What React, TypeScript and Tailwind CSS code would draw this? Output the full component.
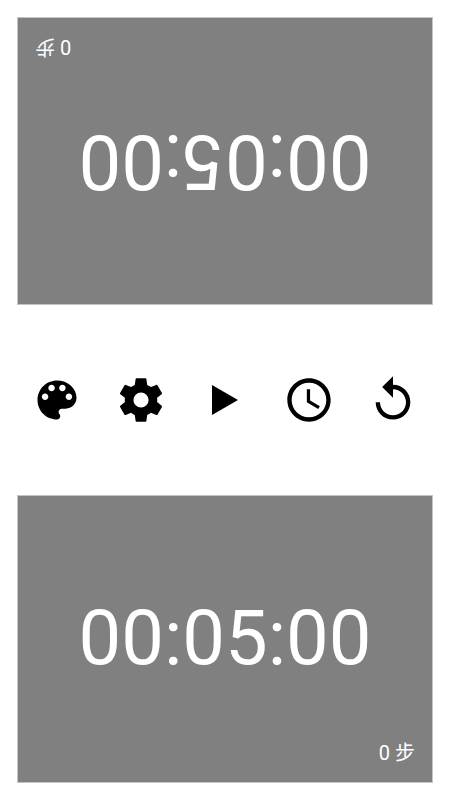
import clsx from "clsx";
import type { ReactNode } from "react";

type Player = {
  time: string;
  moves: number;
};

const players: [Player, Player] = [
  { time: "00:05:00", moves: 0 },
  { time: "00:05:00", moves: 0 },
];

export default function App() {
  return (
    <main className="flex min-h-screen flex-col bg-white p-[17px] font-['Roboto','Noto_Sans_CJK_SC',sans-serif]">
      <ClockPanel player={players[0]} flipped />
      <Toolbar />
      <ClockPanel player={players[1]} />
    </main>
  );
}

// The top panel faces the player sitting on the other side of the phone.
function ClockPanel({ player, flipped = false }: { player: Player; flipped?: boolean }) {
  return (
    <button
      type="button"
      className={clsx(
        "grid flex-1 border border-[#c4c4c4] bg-[#808080] px-[17px] pt-[13px] pb-[15px] text-white",
        flipped && "rotate-180",
      )}
    >
      <span className="col-start-1 row-start-1 self-center justify-self-center text-[76px] leading-[90px]">
        {player.time}
      </span>
      <span className="col-start-1 row-start-1 self-end justify-self-end text-[20px] leading-7">
        {player.moves} 步
      </span>
    </button>
  );
}

function Toolbar() {
  return (
    <nav className="-mx-0.5 grid grid-cols-5 py-[69px] text-black">
      <IconButton label="Theme">
        <path d="M12 3c-4.97 0-9 4.03-9 9s4.03 9 9 9c.83 0 1.5-.67 1.5-1.5 0-.39-.15-.74-.39-1.01-.23-.26-.38-.61-.38-.99 0-.83.67-1.5 1.5-1.5H16c2.76 0 5-2.24 5-5 0-4.42-4.03-8-9-8zm-5.5 9c-.83 0-1.5-.67-1.5-1.5S5.67 9 6.5 9 8 9.67 8 10.5 7.33 12 6.5 12zm3-4C8.67 8 8 7.33 8 6.5S8.67 5 9.5 5s1.5.67 1.5 1.5S10.33 8 9.5 8zm5 0c-.83 0-1.5-.67-1.5-1.5S13.67 5 14.5 5s1.5.67 1.5 1.5S15.33 8 14.5 8zm3 4c-.83 0-1.5-.67-1.5-1.5S16.67 9 17.5 9s1.5.67 1.5 1.5-.67 1.5-1.5 1.5z" />
      </IconButton>
      <IconButton label="Settings">
        <path d="M12 15.5A3.5 3.5 0 0 1 8.5 12 3.5 3.5 0 0 1 12 8.5a3.5 3.5 0 0 1 3.5 3.5 3.5 3.5 0 0 1-3.5 3.5M19.43 12.97C19.47 12.65 19.5 12.33 19.5 12C19.5 11.67 19.47 11.34 19.43 11L21.54 9.37C21.73 9.22 21.78 8.95 21.66 8.73L19.66 5.27C19.54 5.05 19.27 4.96 19.05 5.05L16.56 6.05C16.04 5.66 15.5 5.32 14.87 5.07L14.5 2.42C14.46 2.18 14.25 2 14 2H10C9.75 2 9.54 2.18 9.5 2.42L9.13 5.07C8.5 5.32 7.96 5.66 7.44 6.05L4.95 5.05C4.73 4.96 4.46 5.05 4.34 5.27L2.34 8.73C2.21 8.95 2.27 9.22 2.46 9.37L4.57 11C4.53 11.34 4.5 11.67 4.5 12C4.5 12.33 4.53 12.65 4.57 12.97L2.46 14.63C2.27 14.78 2.21 15.05 2.34 15.27L4.34 18.73C4.46 18.95 4.73 19.03 4.95 18.95L7.44 17.94C7.96 18.34 8.5 18.68 9.13 18.93L9.5 21.58C9.54 21.82 9.75 22 10 22H14C14.25 22 14.46 21.82 14.5 21.58L14.87 18.93C15.5 18.67 16.04 18.34 16.56 17.94L19.05 18.95C19.27 19.03 19.54 18.95 19.66 18.73L21.66 15.27C21.78 15.05 21.73 14.78 21.54 14.63L19.43 12.97Z" />
      </IconButton>
      <IconButton label="Start">
        <path d="M6 5.1v13.8L18 12z" />
      </IconButton>
      <IconButton label="Set time">
        <path d="M11.99 2C6.47 2 2 6.48 2 12s4.47 10 9.99 10C17.52 22 22 17.52 22 12S17.52 2 11.99 2zM12 20c-4.42 0-8-3.58-8-8s3.58-8 8-8 8 3.58 8 8-3.58 8-8 8zM12.5 7H11v6l5.25 3.15.75-1.23-4.5-2.67z" />
      </IconButton>
      <IconButton label="Reset">
        <path d="M12 5V1L7 6l5 5V7c3.31 0 6 2.69 6 6s-2.69 6-6 6-6-2.69-6-6H4c0 4.42 3.58 8 8 8s8-3.58 8-8-3.58-8-8-8z" />
      </IconButton>
    </nav>
  );
}

function IconButton({ label, children }: { label: string; children: ReactNode }) {
  return (
    <button type="button" aria-label={label} className="flex justify-center">
      <svg viewBox="0 0 24 24" fill="currentColor" className="size-[52px]" aria-hidden="true">
        {children}
      </svg>
    </button>
  );
}
